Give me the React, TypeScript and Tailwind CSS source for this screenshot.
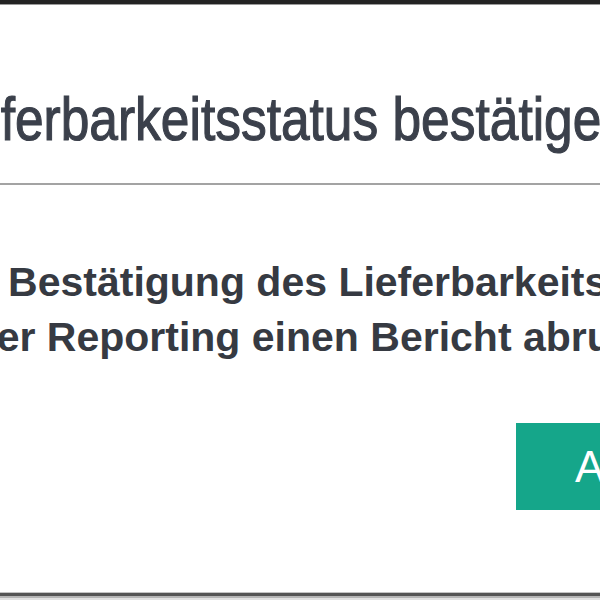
export default function App() {
  return (
    <div className="w-[600px] h-[600px] overflow-hidden bg-white flex flex-col font-['Liberation_Sans',Arial,sans-serif]">
      {/* dialog top edge */}
      <div className="h-[4px] bg-[#232323] shrink-0" />
      <div className="h-px bg-[#9a9a9a] shrink-0" />

      <header className="h-[180px] shrink-0 pt-[83px] border-b-2 border-[#a3a3a3]">
        {/* narrow title face: Arial widths squeezed to Arial Narrow */}
        <h2 className="-ml-[68px] origin-left scale-x-[0.83] whitespace-nowrap text-[62px] leading-[62px] text-[#3b404b] [-webkit-text-stroke:1.2px_#3b404b]">
          Lieferbarkeitsstatus bestätigen
        </h2>
      </header>

      <main className="flex-1 flex flex-col pt-[70px]">
        <p className="-ml-[140px] whitespace-nowrap text-[41px] leading-[55px] font-bold text-[#363a42]">
          Für die Bestätigung des Lieferbarkeitsstatus können
          <br />
          Sie unter Reporting einen Bericht abrufen.
        </p>
        <div className="mt-[58px] flex">
          <button className="ml-[516px] h-[87px] w-[260px] shrink-0 bg-[#15a68a] text-white text-[44px] flex items-center pl-[59px] whitespace-nowrap">
            Anfordern
          </button>
        </div>
      </main>

      {/* dialog bottom edge */}
      <div className="shrink-0 h-px bg-[#c4c4c4]" />
      <div className="shrink-0 h-[3px] bg-[#555]" />
      <div className="shrink-0 h-[2px] bg-[#b5b5b5]" />
      <div className="shrink-0 h-[2px] bg-[#e2e2e2]" />
    </div>
  );
}
